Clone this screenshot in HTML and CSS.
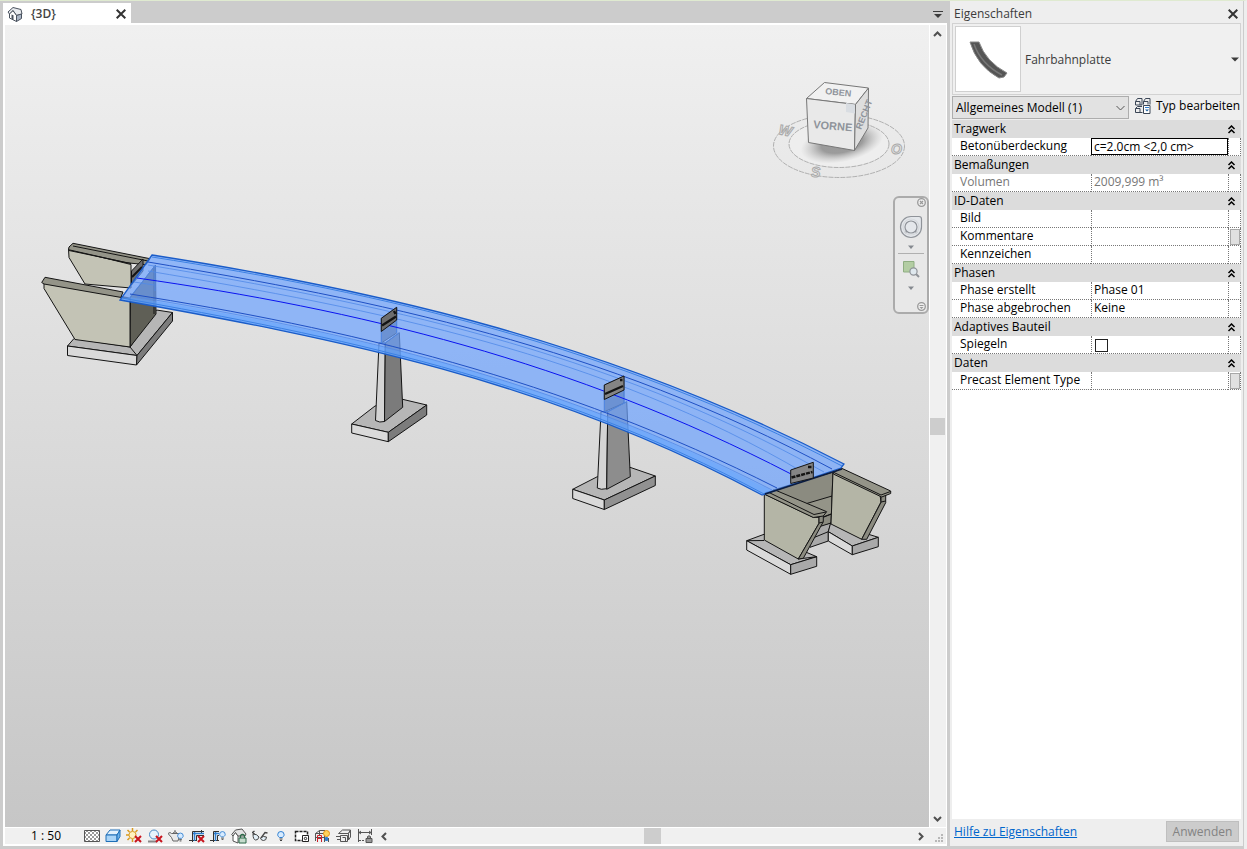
FILE: index.html
```html
<!DOCTYPE html>
<html lang="de">
<head>
<meta charset="utf-8">
<title>{3D} – Eigenschaften</title>
<link rel="stylesheet" href="styles.css">
</head>
<body>
<svg class="defs" aria-hidden="true">
  <symbol id="collapse" viewBox="0 0 9 9"><path d="M1.500 4 4.500 1l3 3M1.500 8l3-3 3 3"/></symbol>
  <symbol id="cross" viewBox="0 0 10 10"><path d="M.7.7l8.600 8.600M9.300.7.7 9.300"/></symbol>
  <symbol id="redx" viewBox="0 0 8 8"><path d="M1 1l6 6M7 1 1 7" stroke="#c8141e" stroke-width="2" fill="none"/></symbol>
  <symbol id="bulb" viewBox="0 0 8 10"><path d="M2.500 6.500C1.200 5.500.7 4.700.7 3.700a3.200 3.200 0 0 1 6.400 0c0 1-.5 1.800-1.800 2.800z" fill="#d7ebff" stroke="#2f7fd0"/><path d="M2.500 8h3M3 9.500h2" stroke="#444"/></symbol>
</svg>
<div class="app">
  <main class="view">
    <div class="tabs">
      <div class="tab">
        <svg class="tab-icon" viewBox="0 0 16 16"><path d="M1 6 6 1.500 14 3.500 15 8 9.500 9.500 6 4.500 2.500 8z" fill="#e8ebef" stroke="#4a525e"/><path d="M2.500 8 6 4.700 9.500 9.500v6L2.500 12z" fill="#fff" stroke="#4a525e"/><path d="M9.500 9.500 14.500 8v4.500l-5 3z" fill="#a9b4c4" stroke="#4a525e"/><path d="M4.500 8.500l2 .8v4.500l-2-1z" fill="#4a525e"/></svg>
        <span class="tab-name">{3D}</span>
        <button class="plain" aria-label="Ansicht schließen"><svg class="x" viewBox="0 0 10 10"><use href="#cross"/></svg></button>
      </div>
      <button class="plain tab-menu" aria-label="Ansichten"><svg width="10" height="7" viewBox="0 0 10 7"><path d="M0 0h10v1H0zM1 3h8L5 7z" fill="#3c3c3c"/></svg></button>
    </div>

    <div class="stage">
      <div class="canvas">
        <svg class="model" viewBox="5 25 924 802" role="img" aria-label="Brückenmodell">
          <g class="edge">
            <!-- left abutment -->
            <path class="c-face" d="M68.500 249 131 264.500V288L85 284 69 257.500z"/>
            <path class="c-cap" d="M69 247l4-3.700 77 15.400-4 6-20-2-57.500-13z"/>
            <path d="M69 250.500l62 13M73 246l75 15" fill="none"/>
            <path class="g-top" d="M67.500 346l6.500-7.500 56 8.500 26.500-37 16 2.500L137 355.500z"/>
            <path class="c-dark" d="M130.500 297l25-32 .5 49-26 33z"/>
            <path class="c-face" d="M44 283l86 15v49l-55-7.500L44 288.500z"/>
            <path class="c-cap" d="M41.700 282.500l3.300-5.200 78 14.700-2 5 9 2-86-15z"/>
            <path class="g-front" d="M67.500 346l69.500 9.500-.5 9.500-69-9.500z"/>
            <path class="g-side" d="M137 355.500l35.500-43v8.500l-36 44z"/>
            <path d="M130 347l7 8.500M154 266v48" fill="none"/>
            <path class="plate" d="M131.500 271l11.500-12v12l-11.500 14z"/>
            <path d="M132 277l10-10" stroke-width="2"/>

            <!-- pier 1 -->
            <path class="g-top" d="M351.700 424l23.300-18 27.500-6.700 24.200 5.700-38.400 27.300z"/>
            <path class="g-front" d="M351.700 424l36.600 8.300v9.400l-36.600-8.700z"/>
            <path class="g-side" d="M388.300 432.300 426.700 405v10l-38.400 26.700z"/>
            <path class="col" d="M379 343h6.300l-.8 78.500q-5 1.500-9-1z"/>
            <path class="col-side" d="M385.300 343l14-10.300 3.400 74.600-18.200 14.200z"/>
            <path class="plate" d="M381.300 318.300l15.400-11V333l-15.400 10z"/>

            <!-- pier 2 -->
            <path class="g-top" d="M572.700 489.300l24.600-12.600 32.700-9.400 25.300 8.700-51 24z"/>
            <path class="g-front" d="M572.700 489.300l31.600 10.700v9.500l-31.600-11z"/>
            <path class="g-side2" d="M604.300 500l51-24v9.500l-51 24z"/>
            <path class="col" d="M601 411.700h6.700l-1 77q-6 1.500-9.400-.7z"/>
            <path class="col-side2" d="M607.700 411.700l19-10 3.600 75-23.600 12.600z"/>
            <path class="plate" d="M604.300 385l19.700-9v27l-19.700 8.700z"/>

            <!-- right abutment -->
            <path class="g-mid" d="M808 540l4-13 19-4-2.700 8.700v9.300l-18.300 6.300z"/>
            <path d="M808 540l20.300-8.300" fill="none"/>
            <path class="c-wall" d="M773 490l60-18-2 51-16 5z"/>
            <path class="c-cap" d="M805 504l27-8-.5 18-10 4z"/>
            <path d="M823 517l8-3" fill="none"/>
            <path class="g-top" d="M828.300 531.700l2.400-9 47.600 14.600-26 8.700z"/>
            <path class="g-front" d="M828.300 531.700l24 14.300v8.700l-24-13.700z"/>
            <path class="g-mid" d="M852.300 546l26-8.700v9.400l-26 8z"/>
            <path class="c-face2" d="M833 472l47 23 1 7-19.300 37.300L831 524z"/>
            <path class="c-wall" d="M885.700 495v7.700l-19 36.600h-5l19.300-37v-6z"/>
            <path class="c-cap" d="M833.300 472.300l8.400-4 49 22.700v2.500l-9 3.500-48.400-23z"/>
            <path d="M834 472.500l47 22.500 9.500-3.500M881 502l4.700-1" fill="none"/>
            <path class="g-top" d="M746.700 540.700l17.300-6.400 52.700 22.400-26 8z"/>
            <path class="g-front" d="M746.700 540.700l44 24v9.600l-44-24.300z"/>
            <path class="g-mid" d="M790.700 564.700l26-8v9.600l-26 8z"/>
            <path d="M764 540.500l-17 .2M798 559l18.700-2.300" fill="none"/>
            <path class="c-face2" d="M764.300 494l49 23.300h5.700v6L798.300 559l-34-19z"/>
            <path class="c-wall" d="M823.300 515v6.700l-20 36.600-5 .7 20.700-35.700v-6.500z"/>
            <path class="c-cap" d="M765 492.700l10-2.700 51.700 21.700-3.400 4.300-10 1.500-48.300-23z"/>
            <path d="M768 492l46 22.500 12-2.500M819 523l4.300-1" fill="none"/>
          </g>

          <!-- carriageway slab -->
          <path class="deck" d="M152 255C383 291 613 344 844 464L841 468 762 495C548 380 334 338 120 300z"/>
          <path class="deck-rim" d="M129 297C345 331 560 381 772 491L762 495C548 380 334 338 120 300z"/>
          <g fill="none">
            <path class="ln-soft" d="M148 265C375 303 603 349 824 472M148 271C375 309 603 354 806 474M137 297C345 331 560 381 772 490M379 343l6 0 14-10M601 411.700l7 0 19-10M381.500 331v12M396.500 320v13M604.500 399v12M624 390v13M130 297l25-31v25M134 282l20 3"/>
            <path class="ln-dark" d="M148 262C375 300 603 346 832 469M130 294C345 328 560 378 777 488"/>
            <path class="ln-rim" d="M152 255C383 291 613 344 844 464L841 468 762 495C548 380 334 338 120 300z"/>
            <path class="ln-rim thin" d="M152 257C383 293 613 346 842 466M122 298C334 336 548 378 764 494"/>
            <path class="ln-axis" d="M137 278C355 309 573 361 791 474"/>
            <path d="M765 494l77-25" stroke="#0b1c40" stroke-width="1.500"/>
          </g>
          <g class="edge">
            <path class="plate" d="M381.300 318.300l15.400-11V320l-15.400 11.500z"/>
            <path class="plate2" d="M604.300 385l19.700-9v14l-19.700 9.500z"/>
            <path class="plate2" d="M790.700 470l22.600-7.700V478l-22.600 5.500z"/>
            <path d="M382 325.500l14-9M394 311l1.500 3M605 394l18-8M620 380h2.500" stroke-width="2.400"/>
            <path d="M791.500 477.500l21-5.500M808 467h3.500" stroke-width="2.400" stroke-dasharray="4 1"/>
          </g>
        </svg>

        <svg class="cube" viewBox="770 80 140 102" role="img" aria-label="ViewCube">
          <defs><radialGradient id="shade"><stop offset="0.500" stop-color="#777" stop-opacity=".7"/><stop offset="1" stop-color="#aaa" stop-opacity="0"/></radialGradient></defs>
          <g fill="none" stroke="#b0b0b0" stroke-dasharray="5 1">
            <ellipse cx="839" cy="146" rx="65.500" ry="31.500"/>
            <ellipse cx="839" cy="144" rx="50" ry="23.500" fill="#eee"/>
          </g>
          <ellipse cx="842" cy="143" rx="42" ry="19" fill="url(#shade)" transform="rotate(-12 842 143)"/>
          <g stroke="#777" stroke-width="1">
            <path d="M806.500 98.500l18-16 44 5.500-13 16.500z" fill="#f1f1f1"/>
            <path d="M806.500 98.500l49 6-1 46-46-8z" fill="#e9e9e9"/>
            <path d="M855.500 104.500l13-16.500-.5 40-13.500 22.500z" fill="#dedede"/>
          </g>
          <path d="M846 103l9 1.500v9l-9-1.500z" fill="#d9dde2"/>
          <text class="face" x="813" y="128" transform="rotate(5 813 128)">VORNE</text>
          <text class="face top" x="825" y="94" transform="rotate(6 825 94)">OBEN</text>
          <text class="face side" x="861" y="130" transform="rotate(-68 861 130)">RECHT</text>
          <g class="compass">
            <text x="778" y="134" transform="rotate(12 778 134)">W</text>
            <text x="811" y="177">S</text>
            <text x="891" y="154">O</text>
          </g>
        </svg>

        <div class="nav">
          <button class="plain nav-close" aria-label="Navigationsleiste schließen"><svg width="9" height="9" viewBox="0 0 9 9"><circle cx="4.500" cy="4.500" r="3.800" fill="#eee" stroke="#999" stroke-width="1.300"/><path d="M3 3l3 3M6 3 3 6" stroke="#999" stroke-width="1.200"/></svg></button>
          <button class="plain nav-wheel" aria-label="Steuerungsrad"><svg width="24" height="24" viewBox="0 0 24 24" fill="#e4e7eb" stroke="#8f9399" stroke-width="1.200"><path d="M12 1.500h8q2.500 0 2.500 2.500v8a10.500 10.500 0 1 1-10.500-10.500z"/><path d="M6 18l2.500-2.500M18 18l-2.500-2.500" stroke-width="1.500"/><circle cx="12" cy="12" r="8" fill="none" stroke="#d5d8dc"/><circle cx="12" cy="12" r="6"/></svg></button>
          <button class="plain" aria-label="Radoptionen"><svg width="6" height="4" viewBox="0 0 6 4"><path d="M0 .5h6L3 4z" fill="#85898f"/></svg></button>
          <hr>
          <button class="plain nav-zoom" aria-label="Zoom"><svg width="18" height="18" viewBox="0 0 18 18"><path d="M1.500 1.500h10.500v10.500H1.500z" fill="#b3cda3" stroke="#8fae82"/><circle cx="11.500" cy="11.500" r="3.600" fill="#dfe8ee" stroke="#8f9399" stroke-width="1.200"/><path d="M14 14l3 3" stroke="#8f9399" stroke-width="2"/></svg></button>
          <button class="plain" aria-label="Zoomoptionen"><svg width="6" height="4" viewBox="0 0 6 4"><path d="M0 .5h6L3 4z" fill="#85898f"/></svg></button>
          <button class="plain nav-more" aria-label="Anpassen"><svg width="9" height="9" viewBox="0 0 9 9"><circle cx="4.500" cy="4.500" r="3.800" fill="#eee" stroke="#999" stroke-width="1.300"/><path d="M2.500 3h4v1h-4zM2.500 5h4l-2 2z" fill="#999"/></svg></button>
        </div>
      </div>
      <div class="scroll-v">
        <button class="plain" aria-label="Nach oben"><svg width="9" height="6" viewBox="0 0 9 6"><path class="arrow" d="M1 5l3.500-3.500L8 5"/></svg></button>
        <span class="thumb"></span>
        <button class="plain" aria-label="Nach unten"><svg width="9" height="6" viewBox="0 0 9 6"><path class="arrow" d="M1 1l3.500 3.500L8 1"/></svg></button>
      </div>
    </div>

    <div class="status">
      <button class="plain scale">1 : 50</button>
      <div class="tools">
        <button class="plain" aria-label="Detaillierungsgrad"><svg viewBox="0 0 16 16"><defs><pattern id="chk" width="4" height="4" patternUnits="userSpaceOnUse"><path d="M0 0h4v4H0z" fill="#fff"/><path d="M0 0h2v2H0zM2 2h2v2H2z" fill="#999"/></pattern></defs><path d="M.5 2.500h15v11H.5z" fill="url(#chk)" stroke="#555"/></svg></button>
        <button class="plain" aria-label="Bildstil"><svg viewBox="0 0 16 16" stroke="#1e6fb8"><path d="M1 7l4-5h10l-3 5z" fill="#e2f1fd"/><path d="M1 7h11v6.500H1z" fill="#a9d4f7"/><path d="M12 7l3-5v6.500l-3 5z" fill="#6cb2ea"/></svg></button>
        <button class="plain" aria-label="Sonnenpfad"><svg viewBox="0 0 16 16"><path d="M6.500 0v3M1.500 2l2 2M0 7h3M1.500 12l2-2M11.500 2l-2 2M6.500 11v3" stroke="#d99a1e" stroke-width="1.500"/><circle cx="6.500" cy="7" r="3.600" fill="#fff3c0" stroke="#d99a1e"/><use href="#redx" x="8" y="7" width="8" height="8"/></svg></button>
        <button class="plain" aria-label="Schatten"><svg viewBox="0 0 16 16"><path d="M1 12.500h9v2H1z" fill="#888"/><circle cx="7" cy="6.500" r="4.500" fill="#e6f3fd" stroke="#4b89c4"/><use href="#redx" x="8" y="7" width="8" height="8"/></svg></button>
        <button class="plain" aria-label="Rendern"><svg viewBox="0 0 16 16" fill="#e9e9e9" stroke="#666"><path d="M3.500 5.500h7l1 2-1.500 5.500H5L3.500 9.500 0 5.500l2-1zM5 5q2-2.500 4 0M7 2v2"/><use href="#bulb" x="9" y="4" width="7" height="10"/></svg></button>
        <button class="plain" aria-label="Zuschneiden"><svg viewBox="0 0 16 16" fill="none"><path d="M3.500 14V3.500H15M0 12.500h8M7.500 12V7.500H15M12.500 2v3" stroke="#333"/><path d="M4 5.500h11M5.500 4v9" stroke="#2f7fd0" stroke-width="1.500"/><use href="#redx" x="8" y="7" width="8" height="8"/></svg></button>
        <button class="plain" aria-label="Zuschneidebereich"><svg viewBox="0 0 16 16" fill="none"><path d="M3.500 14V3.500H9M0 12.500h9M7.500 12V7.500H9" stroke="#333"/><path d="M4 5.500h5M5.500 4v9" stroke="#2f7fd0" stroke-width="1.500"/><use href="#bulb" x="9" y="2" width="7" height="11"/></svg></button>
        <button class="plain" aria-label="3D-Ansicht sperren"><svg viewBox="0 0 16 16" fill="#fff" stroke="#555"><path d="M2 7v6l5 2V8L4.500 4.500z"/><path d="M.7 6.500 4.500 2 11 1l4 5-1 2H7L4.500 4.500 2 8z" fill="#e4e4e4"/><path d="M9.500 10V7.500q2-2 4 0V10" fill="none" stroke="#2e6b4a" stroke-width="1.300"/><path d="M8 10h7v5H8z" fill="#c5dccd" stroke="#2e6b4a"/></svg></button>
        <button class="plain" aria-label="Temporär ausblenden"><svg viewBox="0 0 16 16" fill="#e4f0f8" stroke="#444"><path d="M6 9 .5 4.500l2-1.500M9 10l4-5.500 2.500.5" fill="none" stroke-width="1.300"/><path d="M1 6q4 0 6 3-1 3.500-3.500 3T1 6zM8.500 10q3-2.500 6-1 0 3.500-3 3.500-2.500 0-3-2.500z"/></svg></button>
        <button class="plain" aria-label="Verdeckte Elemente"><svg viewBox="0 0 16 16" fill="none"><use href="#bulb" x="4" y="3" width="8" height="10"/></svg></button>
        <button class="plain" aria-label="Ansichtseigenschaften"><svg viewBox="0 0 16 16" fill="#fff" stroke="#222"><path d="M1.500 3.500h12v9h-12z" stroke-width="1.500" stroke-dasharray="3 1"/><path d="M8.500 7.500h6v6h-6z"/><circle cx="11.500" cy="10.500" r="1.200"/></svg></button>
        <button class="plain" aria-label="Berechnungsmodell"><svg viewBox="0 0 16 16" fill="none" stroke="#555"><path d="M.5 13V5.500l4-3H10M.5 5.500h9V14M4.500 2.500V7M0 9.500h10M13.500 10v4"/><path d="M2.500 14V7.500h4V14M2 10.500h5" stroke="#d0202a"/><circle cx="11.500" cy="5.500" r="3" fill="#ffd45c" stroke="#e59314"/><path d="M10.500 9.500h2v3h-2z" fill="#2f7fd0" stroke="#2f7fd0"/></svg></button>
        <button class="plain" aria-label="Verschiebungssatz"><svg viewBox="0 0 16 16" fill="#eee" stroke="#555"><path d="M2.500 5.500l4-3.500h8l-2 3.500zM12.500 5.500l2-3.500v7l-2 3z"/><path d="M4.500 7.500h7v6h-7z"/><path d="M6.500 9.500h3v4M0 8.500h4M1 11.500h3" fill="none"/></svg></button>
        <button class="plain" aria-label="Abhängigkeiten"><svg viewBox="0 0 16 16" fill="none" stroke="#555"><path d="M1.500 1v13M14.500 1v6M2 4.500h12M4 3 2 4.500 4 6M12 3l2 1.500L12 6"/><path d="M2 12.500h6" stroke-dasharray="2 1"/><path d="M10.500 10V8.500q1.500-1.500 3 0V10M9 10.500h6v4H9z" fill="#999"/></svg></button>
      </div>
      <div class="scroll-h">
        <button class="plain" aria-label="Nach links"><svg width="6" height="9" viewBox="0 0 6 9"><path class="arrow" d="M5 1 1.500 4.500 5 8"/></svg></button>
        <span class="thumb"></span>
        <button class="plain" aria-label="Nach rechts"><svg width="6" height="9" viewBox="0 0 6 9"><path class="arrow" d="M1 1l3.500 3.500L1 8"/></svg></button>
      </div>
      <svg class="grip" viewBox="0 0 8 8" fill="#b8b8b8"><path d="M6 0h2v2H6zM3 3h2v2H3zM6 3h2v2H6zM0 6h2v2H0zM3 6h2v2H3zM6 6h2v2H6z"/></svg>
    </div>
  </main>

  <aside class="props">
    <div class="props-head">
      <span>Eigenschaften</span>
      <button class="plain" aria-label="Palette schließen"><svg class="x" viewBox="0 0 10 10"><use href="#cross"/></svg></button>
    </div>
    <button class="type">
      <span class="type-pic"><svg viewBox="0 0 64 64"><path d="M14 15h9q7 20 28 31l-3 4-5 1Q21 39 14 15z" fill="#555" stroke="#888"/><path d="M18 17q7 20 28 31" fill="none" stroke="#777" stroke-width="1.500"/></svg></span>
      <span class="type-name">Fahrbahnplatte</span>
      <svg width="8" height="5" viewBox="0 0 8 5"><path d="M0 .5h8L4 4.500z" fill="#3c3c3c"/></svg>
    </button>
    <div class="filter">
      <div class="pick">
        <select aria-label="Auswahl"><option>Allgemeines Modell (1)</option></select>
        <svg width="9" height="6" viewBox="0 0 9 6"><path d="M.5 1l4 4 4-4" fill="none" stroke="#555"/></svg>
      </div>
      <button class="plain edit-type">
        <svg width="16" height="16" viewBox="0 0 16 16" fill="none" stroke="#3b4656"><path d="M.5 3.500l2-3H7v6.500H.5zM.5 3.500H5V7M8.500 3.500l2-3H15v6M8.500 6.500v-3H13v3M.5 10.500l2-2H7M7.500 14.500h-7v-4H5v4"/><path d="M8.500 7.500h6.500v8H8.500z" fill="#fff"/><path d="M10 9.500h4" stroke="#2f7fd0"/><path d="M10 11.500h4l-2 2z" fill="#1e5f9e" stroke="none"/></svg>
        <span>Typ bearbeiten</span>
      </button>
    </div>
    <div class="sheet">
      <table class="grid">
        <colgroup><col class="c-name"><col><col class="c-act"></colgroup>
        <tbody>
          <tr class="group"><th colspan="3"><div><span>Tragwerk</span><button class="plain" aria-label="Tragwerk einklappen"><svg class="fold"><use href="#collapse"/></svg></button></div></th></tr>
          <tr><td><label for="cover">Betonüberdeckung</label></td><td class="editing"><input id="cover" type="text" value="c=2.0cm &lt;2,0 cm&gt;"></td><td></td></tr>
          <tr class="group"><th colspan="3"><div><span>Bemaßungen</span><button class="plain" aria-label="Bemaßungen einklappen"><svg class="fold"><use href="#collapse"/></svg></button></div></th></tr>
          <tr class="off"><td>Volumen</td><td>2009,999 m³</td><td></td></tr>
          <tr class="group"><th colspan="3"><div><span>ID-Daten</span><button class="plain" aria-label="ID-Daten einklappen"><svg class="fold"><use href="#collapse"/></svg></button></div></th></tr>
          <tr><td>Bild</td><td></td><td></td></tr>
          <tr><td>Kommentare</td><td></td><td><button class="more" aria-label="Kommentare bearbeiten"></button></td></tr>
          <tr><td>Kennzeichen</td><td></td><td></td></tr>
          <tr class="group"><th colspan="3"><div><span>Phasen</span><button class="plain" aria-label="Phasen einklappen"><svg class="fold"><use href="#collapse"/></svg></button></div></th></tr>
          <tr><td>Phase erstellt</td><td>Phase 01</td><td></td></tr>
          <tr><td>Phase abgebrochen</td><td>Keine</td><td></td></tr>
          <tr class="group"><th colspan="3"><div><span>Adaptives Bauteil</span><button class="plain" aria-label="Adaptives Bauteil einklappen"><svg class="fold"><use href="#collapse"/></svg></button></div></th></tr>
          <tr><td><label for="flip">Spiegeln</label></td><td><input id="flip" type="checkbox"></td><td></td></tr>
          <tr class="group"><th colspan="3"><div><span>Daten</span><button class="plain" aria-label="Daten einklappen"><svg class="fold"><use href="#collapse"/></svg></button></div></th></tr>
          <tr><td>Precast Element Type</td><td></td><td><button class="more" aria-label="Precast Element Type bearbeiten"></button></td></tr>
        </tbody>
      </table>
    </div>
    <div class="props-foot">
      <a href="#hilfe">Hilfe zu Eigenschaften</a>
      <button class="apply" disabled>Anwenden</button>
    </div>
  </aside>
</div>
</body>
</html>
```

FILE: styles.css
```css
* { box-sizing: border-box; }
html, body { height: 100%; }
body {
  margin: 0;
  background: #cccccc;
  color: #000;
  font: 12px/16px "Open Sans", "Noto Sans", sans-serif;
}
.defs { position: absolute; width: 0; height: 0; }
svg { display: block; flex: none; }
button, input, select { font: inherit; color: inherit; margin: 0; }
.plain {
  display: flex;
  align-items: center;
  justify-content: center;
  padding: 0;
  border: 0;
  background: none;
}

.app {
  display: grid;
  grid-template-columns: minmax(0, 1fr) 293px;
  gap: 3px;
  height: 100%;
  padding: 0 1px 3px 3px;
  border-top: 1px solid #dfead0;
  border-right: 3px solid #eeeeee;
}

/* drawing view */
.view { display: flex; flex-direction: column; min-width: 0; min-height: 0; padding-top: 2px; }
.tabs { display: flex; justify-content: space-between; height: 20px; flex: none; }
.tab { display: flex; align-items: center; width: 128px; padding: 1px 5px 0 4px; background: #fff; }
.tab-icon { width: 16px; height: 16px; }
.tab-name { flex: 1; padding-left: 8px; font-weight: 600; color: #444; }
.x { width: 10px; height: 10px; fill: none; stroke: #333; stroke-width: 2; }
.tab-menu { width: 18px; padding-top: 2px; }

.stage { display: flex; flex: 1; min-height: 0; border: solid #fff; border-width: 2px 1px 1px 2px; }
.canvas {
  position: relative;
  flex: 1;
  min-width: 0;
  overflow: hidden;
  background: linear-gradient(#f0f0f0, #c6c6c6);
}
.model { width: 100%; height: 100%; }
.edge { stroke: #141414; stroke-width: 1; stroke-linejoin: round; }
.c-face { fill: #c3c3b5; }
.c-face2 { fill: #b4b5a6; }
.c-cap { fill: #949488; }
.c-wall { fill: #8b8b80; }
.c-dark { fill: #5f5f56; }
.g-top { fill: #b6b6b6; }
.g-front { fill: #dadada; }
.g-side { fill: #7c7c7c; }
.g-side2 { fill: #919191; }
.g-mid { fill: #a9a9a9; }
.col { fill: #d4d4d4; }
.col-side { fill: #7b7b7b; }
.col-side2 { fill: #8d8d8d; }
.plate { fill: #6d6d6d; }
.plate2 { fill: #858585; }
.deck { fill: #6ca3ff; fill-opacity: .7; }
.deck-rim { fill: #5aa2ff; fill-opacity: .5; }
.ln-soft { stroke: #5089e8; stroke-opacity: .8; }
.ln-dark { stroke: #1f50c4; }
.ln-rim { stroke: #1a5cc8; stroke-width: 1.3; }
.thin { stroke-width: 1; stroke: #3d82e4; }
.ln-axis { stroke: #0a14f0; stroke-width: 1; }

.cube { position: absolute; top: 55px; right: 19px; width: 140px; height: 102px; }
.face { font: bold 11px "Liberation Sans", sans-serif; fill: #8f949b; }
.top { font-size: 9px; }
.side { font-size: 9px; }
.compass { font: italic bold 14px "Liberation Sans", sans-serif; fill: #e8e8e8; stroke: #aaa; stroke-width: 1; }

.nav {
  position: absolute;
  top: 171px;
  right: 0;
  display: flex;
  flex-direction: column;
  align-items: center;
  width: 36px;
  height: 118px;
  border: 2px solid #ababab;
  border-radius: 6px;
  background: #e8e8e8;
}
.nav-close, .nav-more { align-self: flex-end; padding: 0 1px; }
.nav-wheel { margin: 8px 0 6px; }
.nav hr { width: 26px; margin: 4px 0 6px; border: 0; border-top: 1px solid #b0b0b0; }
.nav-zoom { margin-bottom: 8px; }
.nav-more { margin-top: auto; padding-bottom: 1px; }

.scroll-v {
  display: flex;
  flex-direction: column;
  align-items: stretch;
  justify-content: space-between;
  width: 17px;
  padding-right: 1px;
  border-left: 1px solid #fff;
  background: #f0f0f0;
}
.scroll-v .plain { height: 17px; }
.thumb { background: #cdcdcd; }
.scroll-v .thumb { height: 17px; }
.arrow { fill: none; stroke: #505050; stroke-width: 2; }

.status {
  display: flex;
  align-items: center;
  flex: none;
  height: 18px;
  padding-left: 27px;
  border: solid #fff;
  border-width: 0 1px 2px 2px;
  background: #f0f0f0;
}
.scale { width: 28px; white-space: nowrap; }
.tools { display: flex; padding-left: 21px; }
.tools .plain { width: 21px; height: 16px; }
.tools svg { width: 16px; height: 16px; }
.tools .plain { align-items: flex-start; }
.scroll-h { display: flex; flex: 1; justify-content: space-between; }
.scroll-h .plain, .scroll-h .thumb { width: 17px; height: 16px; }
.grip { width: 8px; height: 8px; margin: 4px 3px 0 6px; }

/* property palette */
.props { display: flex; flex-direction: column; min-height: 0; padding: 2px 2px 0; background: #eeeeee; }
.props-head { display: flex; align-items: center; justify-content: space-between; height: 20px; padding: 2px 3px 0 2px; color: #3c3c3c; flex: none; }
.type {
  display: flex;
  align-items: center;
  gap: 4px;
  height: 72px;
  padding: 2px;
  border: 1px solid #d2d2d2;
  background: #f0f0f0;
  color: #3c3c3c;
  text-align: left;
  flex: none;
}
.type-pic { width: 66px; height: 66px; border: 1px solid #d0d0d0; background: #fff; }
.type-name { flex: 1; padding-top: 2px; }
.type > svg { margin-right: -1px; }

.filter { display: flex; gap: 6px; height: 25px; padding-top: 1px; flex: none; }
.pick { position: relative; width: 177px; height: 23px; }
.pick select {
  width: 100%;
  height: 100%;
  padding: 0 3px;
  border: 1px solid #adadad;
  border-radius: 0;
  background: #e2e2e2;
  appearance: none;
}
.pick svg { position: absolute; top: 9px; right: 4px; pointer-events: none; }
.edit-type { gap: 5px; height: 20px; white-space: nowrap; }

.sheet { flex: 1; min-height: 0; overflow: hidden; background: #fff; }
.grid { width: 100%; border-collapse: separate; border-spacing: 0; table-layout: fixed; }
.c-name { width: 139px; }
.c-act { width: 13px; }
.grid tr { height: 18px; }
.grid th { padding: 0; background: #dcdcdc; font-weight: 400; text-align: left; }
.grid th div { display: flex; align-items: center; justify-content: space-between; height: 18px; padding: 0 5px 0 2px; }
.fold { width: 9px; height: 9px; fill: none; stroke: #000; stroke-width: 1.5; }
.grid td {
  height: 18px;
  padding: 0 0 1px 2px;
  border-bottom: 1px dotted #777;
  border-left: 1px dotted #777;
  line-height: 16px;
  white-space: nowrap;
}
.grid td:first-child { padding-left: 8px; border-left: 0; }
.grid td:last-child { padding: 0; border-right: 1px dotted #777; }
.grid .off td { color: #777; }
.grid .editing { padding: 0; border-left: 0; }
.editing input { display: block; width: 100%; height: 17px; padding: 0 2px; border: 1px solid #000; background: #fff; outline: 0; }
.grid input[type="checkbox"] {
  display: block;
  width: 13px;
  height: 13px;
  margin: 2px 0 0 1px;
  border: 1px solid #222;
  background: #fff;
  appearance: none;
}
.more { display: block; width: 10px; height: 16px; margin: 1px 0 0 1px; padding: 0; border: 1px solid #a8a8a8; background: #e0e0e0; }

.props-foot { display: flex; align-items: center; justify-content: space-between; height: 27px; padding: 0 2px 2px; flex: none; }
.props-foot a { color: #0066cc; }
.apply { width: 73px; height: 21px; padding: 0; border: 1px solid #bfbfbf; background: #cccccc; color: #838383; }
```
